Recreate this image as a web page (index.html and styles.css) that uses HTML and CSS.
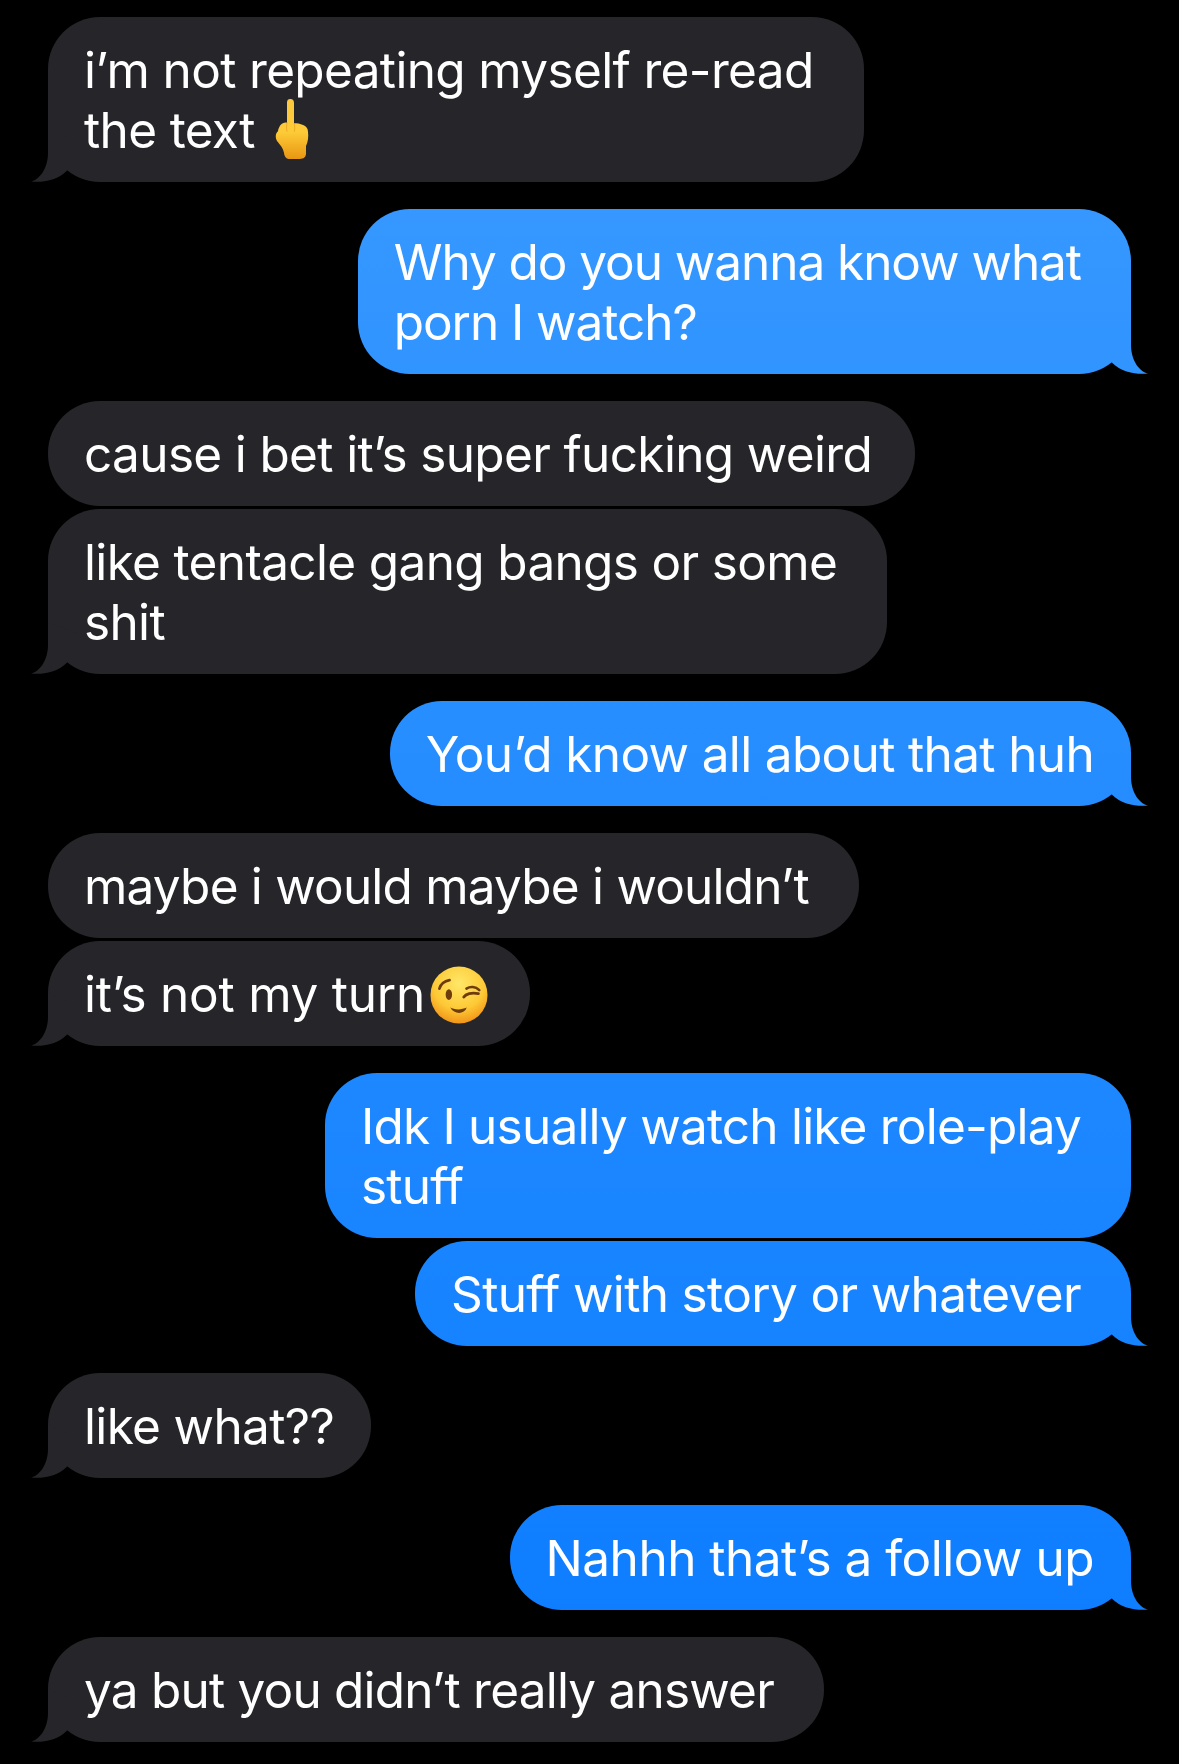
FILE: index.html
```html
<!DOCTYPE html>
<html>
<head>
    <title>Messages</title>
    <meta charset="UTF-8">
    <link rel="stylesheet" href="styles.css">
</head>
<body>
    <div class="thread">
        <div class="bubble them tail end-wide">i’m not repeating myself re-read<br>the text <svg class="emoji finger" viewBox="26 25 102 184"><defs><linearGradient id="hand" x1="0" y1="0" x2="0" y2="1"><stop offset="0" stop-color="#fbc840"/><stop offset="0.55" stop-color="#fdcb38"/><stop offset="1" stop-color="#e99612"/></linearGradient></defs><path fill="url(#hand)" d="M62 38C62 30 66 27 72 27C78 27 83 30 83 38L83 100C100 100 125 105 125 125C127 140 125 155 119 168L119 190C119 202 112 207 100 207L72 207C60 207 54 200 53 188C50 175 42 165 35 157C26 148 26 130 35 124C37 108 48 95 62 98Z"/><path fill="none" stroke="#d98a12" stroke-width="3" stroke-linecap="round" opacity="0.5" d="M62 98C60 108 60 116 62 124M84 102C86 110 86 118 84 124"/></svg></div>

        <div class="bubble me tail end-wide tight">Why do you wanna know what<br>porn I watch?</div>

        <div class="bubble them end-mid">cause i bet it’s super fucking weird</div>
        <div class="bubble them tail end-wide next">like tentacle gang bangs or some<br>shit</div>

        <div class="bubble me tail">You’d know all about that huh</div>

        <div class="bubble them end-wide snug">maybe i would maybe i wouldn’t</div>
        <div class="bubble them tail next airy">it’s not my turn<svg class="emoji wink" viewBox="0 0 60 60"><defs><radialGradient id="face" cx="0.5" cy="0.3" r="0.75"><stop offset="0" stop-color="#ffe768"/><stop offset="0.6" stop-color="#fdc936"/><stop offset="1" stop-color="#ef8a12"/></radialGradient></defs><circle cx="30" cy="30" r="29.500" fill="url(#face)"/><g fill="none" stroke="#6e3c0c" stroke-linecap="round"><path stroke-width="2.800" d="M9.700 23.400C11 19 15 15.500 20.200 14.600"/><path stroke-width="2.600" d="M37.700 23.400C41.500 21 47 21 51 25"/><path stroke-width="3" d="M35 32.100C37 29 43 27 50 28.600"/></g><ellipse cx="19.500" cy="29.600" rx="3.300" ry="5.500" fill="#6e3c0c"/><path fill="#6e3c0c" d="M21 43C25 45.500 33 45.500 38 43C35.500 50.500 25 50.500 21 43Z"/></svg></div>

        <div class="bubble me end-wide snug">Idk I usually watch like role-play<br>stuff</div>
        <div class="bubble me tail end-wide next">Stuff with story or whatever</div>

        <div class="bubble them tail">like what??</div>

        <div class="bubble me tail loose">Nahhh that’s a follow up</div>

        <div class="bubble them tail end-wide snug">ya but you didn’t really answer</div>
    </div>
</body>
</html>
```
FILE: styles.css
```css
html, body {
    margin: 0;
    background: #000;
}
body {
    font-family: Inter, "Liberation Sans", sans-serif;
}
.thread {
    display: flex;
    flex-direction: column;
    gap: 27px;
    padding: 17px 48px 0 48px;
}
.bubble {
    position: relative;
    box-sizing: border-box;
    padding: 22.500px 37px 22.500px 36px;
    border-radius: 52px;
    font-size: 49.500px;
    letter-spacing: -0.650px;
    line-height: 60px;
    color: #fff;
    white-space: nowrap;
}
.end-wide {
    padding-right: 50px;
}
.end-mid {
    padding-right: 43px;
}
/* per message tracking, the font is wider or narrower than the original on some lines */
.tight {
    letter-spacing: -1.050px;
}
.snug {
    letter-spacing: -0.790px;
}
.loose {
    letter-spacing: -0.500px;
}
.airy {
    letter-spacing: -0.250px;
}
.next {
    margin-top: -24px;
}
.them {
    align-self: flex-start;
    background: #26262a;
}
.me {
    align-self: flex-end;
    background: linear-gradient(#3b9bff, #0a7bff) fixed;
}
/* tails */
.tail::after {
    content: "";
    position: absolute;
    bottom: 0;
    width: 60px;
    height: 60px;
}
.them.tail::after {
    left: -20px;
    background: #26262a;
    clip-path: path("M20 8L20 31C20 45 13 57 3 59.500C12 60.500 28 60 39.700 48L50 20Z");
}
.me.tail::after {
    right: -20px;
    background: linear-gradient(#3b9bff, #0a7bff) fixed;
    clip-path: path("M40 8L40 31C40 45 47 57 57 59.500C48 60.500 32 60 20.300 48L10 20Z");
}
/* negative margins keep the emoji from making the line taller */
.emoji {
    display: inline-block;
    vertical-align: middle;
}
.finger {
    width: 34px;
    height: 62px;
    margin: -22px 0 -12px 7px;
}
.wink {
    width: 58px;
    height: 58px;
    margin: -20px 5px -14px 5px;
}
```
